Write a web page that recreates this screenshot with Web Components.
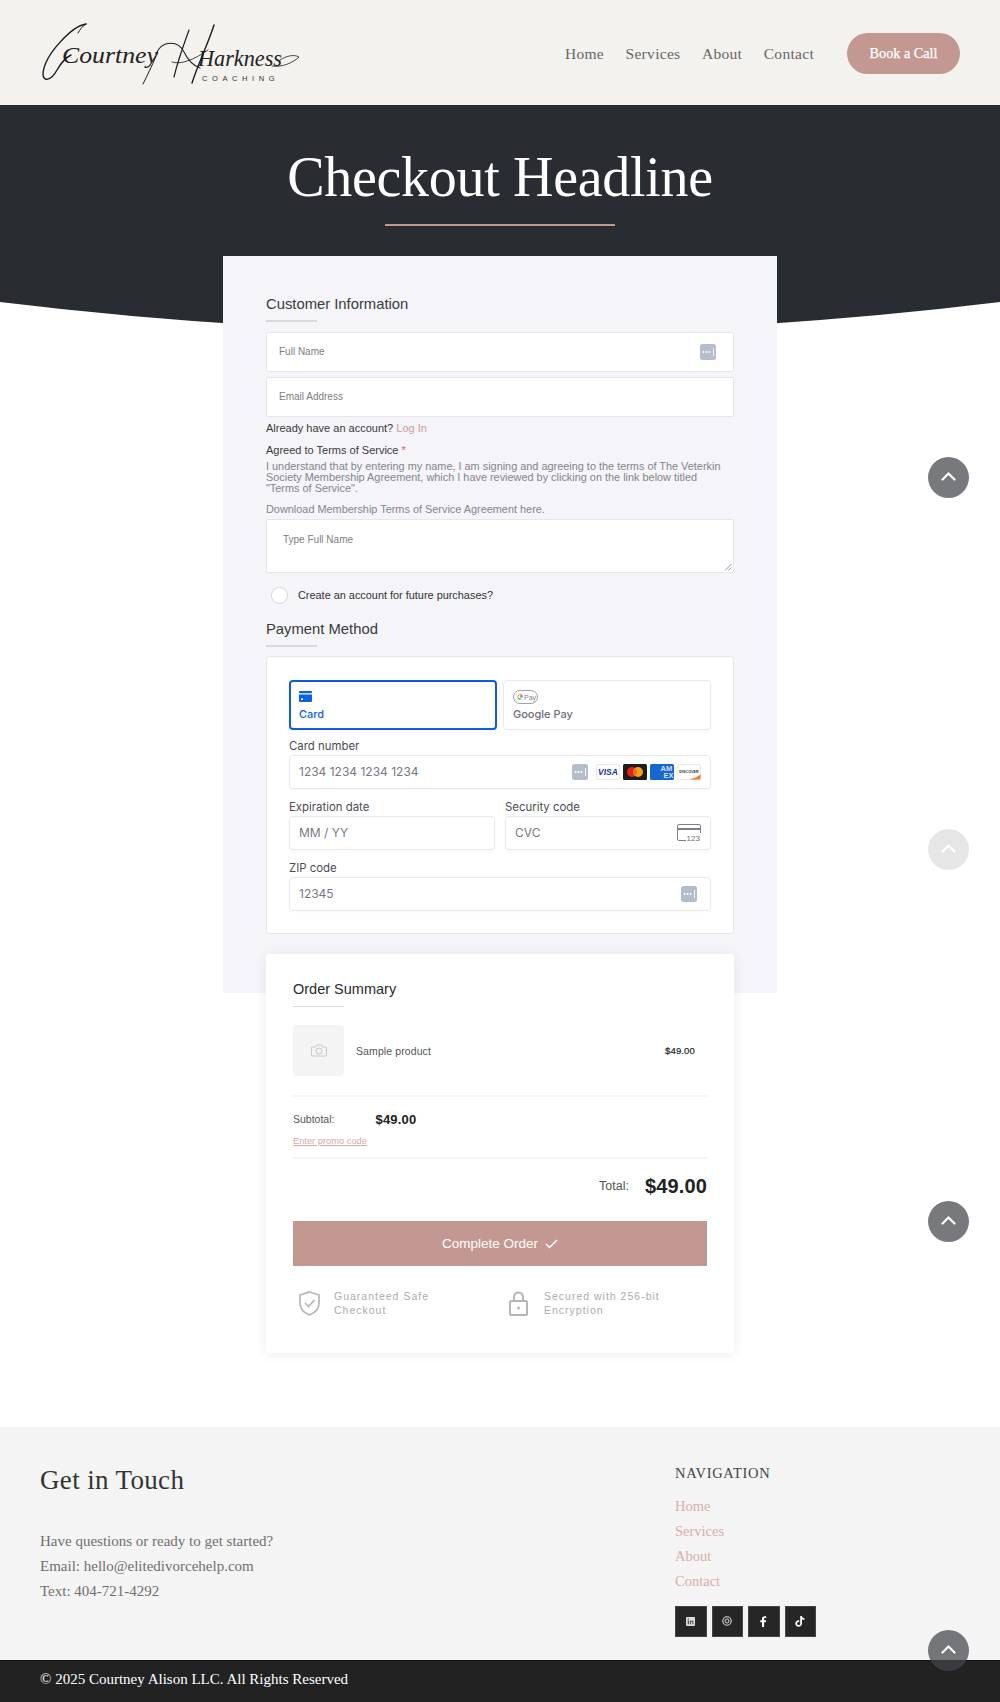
<!DOCTYPE html>
<html lang="en">
<head>
<meta charset="utf-8">
<title>Checkout</title>
<style>
  html, body { margin: 0; background: #fff; }
  body { position: relative; font-family: "Liberation Sans", Arial, sans-serif; }
</style>
</head>
<body>

<site-header></site-header>

<checkout-hero heading="Checkout Headline">
  <form-panel>
    <section-title>Customer Information</section-title>
    <text-field placeholder="Full Name" dots></text-field>
    <text-field placeholder="Email Address" style="margin-top:5px"></text-field>
    <terms-block></terms-block>
    <section-title style="margin-top:15px">Payment Method</section-title>
    <stripe-payment style="margin-top:-1px"></stripe-payment>
  </form-panel>
</checkout-hero>

<order-summary></order-summary>
<site-footer></site-footer>

<scroll-top style="top:457px"></scroll-top>
<scroll-top style="top:829px" faded></scroll-top>
<scroll-top style="top:1201px"></scroll-top>
<scroll-top style="top:1630px"></scroll-top>

<script>
const serif = `"Liberation Serif", "Times New Roman", serif`;
const sans = `"Liberation Sans", Arial, sans-serif`;

function define(name, html) {
    customElements.define(name, class extends HTMLElement {
        constructor() {
            super();
            this.attachShadow({ mode: "open" });
            this.shadowRoot.innerHTML = typeof html === "function" ? html(this) : html;
        }
    });
}

define("site-header", `
<style>
    :host { display: flex; align-items: center; height: 103px; padding: 2px 40px 0; background: #f4f2ee;
            border-bottom: 1px solid #26282c; font-family: ${serif}; }
    svg { display: block; flex: none; margin-top: -2px; }
    nav { margin-left: auto; display: flex; gap: 21.5px; font-size: 15.5px; letter-spacing: .3px; color: #666; }
    a { white-space: nowrap; }
    .cta { margin-left: 33px; width: 113px; height: 41px; border-radius: 21px; background: #c49892; color: #fff;
           display: flex; align-items: center; justify-content: center; font-size: 14.2px; -webkit-text-stroke: .25px #fff; }
</style>
<svg width="262" height="70" viewBox="38 18 262 70" fill="none">
    <g fill="#222" font-family="'Liberation Serif', serif" font-style="italic" font-size="24">
        <text x="60" y="63" textLength="96" lengthAdjust="spacingAndGlyphs">Courtney</text>
        <text x="196" y="66" textLength="84" lengthAdjust="spacingAndGlyphs">Harkness</text>
    </g>
    <g stroke="#1c1c1c" stroke-linecap="round">
        <path d="M84 24C70 26 42 55 41 74C41 82 49 81 55 70C59 63 63 58 69 55" stroke-width="1.4"/>
        <path d="M84 24C80 26 78 30 76 33" stroke-width="1"/>
        <path d="M154 56C150 66 145 76 141 84" stroke-width="1"/>
        <path d="M154 54C160 40 176 40 182 52C187 62 192 66 198 68" stroke-width="1.1"/>
        <path d="M187 30C182 44 176 60 172 77" stroke-width="1.2"/>
        <path d="M212 25C206 44 196 64 190 83" stroke-width="1.4"/>
        <path d="M170 62C178 65 192 60 206 50" stroke-width=".8"/>
        <path d="M270 66C280 68 292 62 297 57C292 54 284 56 278 60" stroke-width=".8"/>
    </g>
    <text x="200" y="81" font-family="'Liberation Sans', sans-serif" font-size="7.5" letter-spacing="4.6" fill="#333">COACHING</text>
</svg>
<nav><a>Home</a><a>Services</a><a>About</a><a>Contact</a></nav>
<a class="cta">Book a Call</a>
`);

define("checkout-hero", host => `
<style>
    :host { display: block; position: relative; font-family: ${serif}; }
    svg { position: absolute; left: 0; top: 0; width: 100%; height: 240px; display: block; }
    .inner { position: relative; display: flex; flex-direction: column; align-items: center; }
    h1 { margin: 37px 0 0; font-weight: 400; font-size: 56px; line-height: 68px; color: #fff; letter-spacing: -.3px; }
    .rule { width: 230px; height: 1.5px; background: #c49892; margin: 13px 0 30px; }
</style>
<svg viewBox="0 0 1000 240" preserveAspectRatio="none"><path d="M0 0H1000V196Q500 257 0 196Z" fill="#292c31"/></svg>
<div class="inner">
    <h1>${host.getAttribute("heading")}</h1>
    <div class="rule"></div>
    <slot></slot>
</div>
`);

define("form-panel", `
<style>
    :host { display: block; box-sizing: border-box; width: 554px; height: 737px; padding: 38px 43px 0; background: #f4f4f9; font-family: ${sans}; }
</style>
<slot></slot>
`);

define("section-title", `
<style>
    :host { display: block; font-size: 14.8px; line-height: 20px; color: #3a3a3a; font-family: ${sans}; }
    .rule { width: 51px; height: 2px; background: #d9d9dd; margin: 6px 0 10px; }
</style>
<div><slot></slot></div>
<div class="rule"></div>
`);

define("dots-icon", `
<style>:host { display: block; width: 16px; height: 16px; flex: none; } svg { display: block; }</style>
<svg width="16" height="16" viewBox="0 0 16 16">
    <rect width="16" height="16" rx="2.5" fill="#b5bccb"/>
    <circle cx="3.5" cy="8" r="1" fill="#fff"/><circle cx="6.5" cy="8" r="1" fill="#fff"/><circle cx="9.5" cy="8" r="1" fill="#fff"/>
    <rect x="13" y="4" width=".8" height="8" fill="#fff"/>
</svg>
`);

define("text-field", host => `
<style>
    :host { display: flex; align-items: center; box-sizing: border-box; height: 40px; padding: 0 17px 0 12px; background: #fff;
            border: 1px solid #e6e6ea; border-radius: 2px; font-size: 10px; color: #7d7d7d; font-family: ${sans}; }
    span { flex: 1; }
</style>
<span>${host.getAttribute("placeholder")}</span>
${host.hasAttribute("dots") ? "<dots-icon></dots-icon>" : ""}
`);

define("terms-block", `
<style>
    :host { display: block; font-family: ${sans}; font-size: 11px; color: #3a3a3a; }
    .acct { margin-top: 4px; line-height: 14px; }
    .acct a { color: #cf9f9b; }
    .agree { margin-top: 8px; line-height: 14px; }
    .agree i { font-style: normal; color: #e25b55; }
    .desc { margin-top: 4px; line-height: 11px; font-size: 10.9px; color: #85858a; white-space: nowrap; }
    .down { margin-top: 8px; line-height: 14px; font-size: 10.9px; color: #85858a; }
    .area { position: relative; box-sizing: border-box; height: 54px; margin-top: 3px; padding: 14px 16px; background: #fff;
            border: 1px solid #e6e6ea; border-radius: 2px; font-size: 10px; line-height: 12px; color: #808080; }
    .grip { position: absolute; right: 1px; bottom: 1px; }
    .create { display: flex; align-items: center; gap: 10px; margin: 14px 0 0 5px; line-height: 17px; font-size: 10.9px; color: #333; }
    .radio { width: 15px; height: 15px; flex: none; border: 1px solid #d7d7da; border-radius: 50%; background: #fff; }
</style>
<div class="acct">Already have an account? <a>Log In</a></div>
<div class="agree">Agreed to Terms of Service <i>*</i></div>
<div class="desc">I understand that by entering my name, I am signing and agreeing to the terms of The Veterkin<br>Society Membership Agreement, which I have reviewed by clicking on the link below titled<br>"Terms of Service".</div>
<div class="down">Download Membership Terms of Service Agreement here.</div>
<div class="area">Type Full Name
    <svg class="grip" width="8" height="8" viewBox="0 0 8 8" fill="none" stroke="#777" stroke-width=".8"><path d="M1 7.5L7.5 1M4.5 7.5L7.5 4.5"/></svg>
</div>
<div class="create"><div class="radio"></div><div>Create an account for future purchases?</div></div>
`);

define("stripe-input", host => `
<style>
    :host { display: block; font-family: Inter, ${sans}; }
    label { display: block; font-size: 11.4px; line-height: 14px; color: #4a4b55; margin-bottom: 2px; }
    .box { display: flex; align-items: center; box-sizing: border-box; height: 34px; padding: 0 9px; background: #fff;
           border: 1px solid #e9e9ec; border-radius: 4px; box-shadow: 0 1px 2px rgba(0,0,0,.03); font-size: 12px; color: #77787f; }
    span { flex: 1; }
    .icons { display: flex; align-items: center; gap: 3px; }
</style>
<label>${host.getAttribute("label")}</label>
<div class="box"><span>${host.getAttribute("placeholder")}</span><div class="icons"><slot></slot></div></div>
`);

define("card-brands", `
<style>
    :host { display: flex; gap: 3px; margin-left: 5px; }
    svg { display: block; }
</style>
<svg width="24" height="16" viewBox="0 0 24 16">
    <rect x=".5" y=".5" width="23" height="15" rx="1.5" fill="#fff" stroke="#e8e8ea"/>
    <text x="12" y="11.3" text-anchor="middle" font-family="'Liberation Sans', sans-serif" font-size="8.5" font-weight="700" font-style="italic" fill="#1434a8">VISA</text>
</svg>
<svg width="24" height="16" viewBox="0 0 24 16">
    <rect width="24" height="16" rx="1.5" fill="#1d1d1d"/>
    <circle cx="9" cy="8" r="5" fill="#e2231a"/><circle cx="15" cy="8" r="5" fill="#f79e1b"/>
    <path d="M12 4a5 5 0 0 1 0 8a5 5 0 0 1 0-8Z" fill="#f26a1f"/>
</svg>
<svg width="24" height="16" viewBox="0 0 24 16">
    <rect width="24" height="16" rx="1.5" fill="#1668cf"/>
    <g font-family="'Liberation Sans', sans-serif" font-size="7.5" font-weight="700" fill="#cfe2f8"><text x="10.5" y="7">AM</text><text x="13.5" y="14">EX</text></g>
</svg>
<svg width="24" height="16" viewBox="0 0 24 16">
    <rect x=".5" y=".5" width="23" height="15" rx="1.5" fill="#fff" stroke="#e8e8ea"/>
    <path d="M12 15.5C17 14.5 21 12.5 23.5 10.5V15.5Z" fill="#f27a24"/>
    <text x="12" y="9" text-anchor="middle" font-family="'Liberation Sans', sans-serif" font-size="3.7" font-weight="700" fill="#333">DISCOVER</text>
</svg>
`);

define("stripe-payment", `
<style>
    :host { display: block; box-sizing: border-box; height: 278px; padding: 23px 22px 0; background: #fff; border: 1px solid #e7e7eb; border-radius: 4px; font-family: Inter, ${sans}; }
    .tabs { display: grid; grid-template-columns: 208px 208px; gap: 6px; }
    .tab { box-sizing: border-box; height: 50px; padding: 9px 9px 0; border: 1px solid #e9e9ec; border-radius: 4px; font-size: 11px; font-weight: 500; color: #6d6e78; box-shadow: 0 1px 2px rgba(0,0,0,.03); }
    .tab.on { border: 2px solid #0b5fde; padding: 8px 8px 0; color: #0b62e0; }
    .tab svg { display: block; height: 14px; margin-bottom: 3px; }
    .tab div { line-height: 14px; }
    .rows { display: grid; grid-template-columns: 206px 206px; column-gap: 10px; row-gap: 11px; margin-top: 9px; }
    .wide { grid-column: 1 / 3; }
</style>
<div class="tabs">
    <div class="tab on">
        <svg width="14" height="14" viewBox="0 0 14 14" fill="#0b62e0"><rect y="1" width="13" height="2.2" rx=".8"/><path d="M0 4.5h13V11a1 1 0 0 1-1 1H1a1 1 0 0 1-1-1Z"/><rect x="2" y="8.4" width="2" height="1.6" fill="#fff"/></svg>
        <div>Card</div>
    </div>
    <div class="tab">
        <svg width="26" height="14" viewBox="0 0 26 14" fill="none">
            <rect x=".5" y=".5" width="24" height="13" rx="6.5" fill="#fff" stroke="#8b8c92" stroke-width=".8"/>
            <circle cx="7" cy="7" r="2.2" stroke="#ea4335" stroke-width="1.1" stroke-dasharray="3.5 10.5" stroke-dashoffset="-9"/>
            <circle cx="7" cy="7" r="2.2" stroke="#fbbc05" stroke-width="1.1" stroke-dasharray="3.5 10.5" stroke-dashoffset="-5.5"/>
            <circle cx="7" cy="7" r="2.2" stroke="#34a853" stroke-width="1.1" stroke-dasharray="3.5 10.5" stroke-dashoffset="-2"/>
            <path d="M7 7H9.4" stroke="#4285f4" stroke-width="1.1"/>
            <text x="11" y="9.6" font-family="'Liberation Sans', sans-serif" font-size="7" fill="#85868c">Pay</text>
        </svg>
        <div>Google Pay</div>
    </div>
</div>
<div class="rows">
    <stripe-input class="wide" label="Card number" placeholder="1234 1234 1234 1234"><dots-icon></dots-icon><card-brands></card-brands></stripe-input>
    <stripe-input label="Expiration date" placeholder="MM / YY"></stripe-input>
    <stripe-input label="Security code" placeholder="CVC">
        <svg width="24" height="18" viewBox="0 0 24 18" fill="none" stroke="#7d7e86" stroke-width="1">
            <path d="M9 16.5H2a1.5 1.5 0 0 1-1.5-1.5V2A1.5 1.5 0 0 1 2 .5H22A1.5 1.5 0 0 1 23.5 2V9"/>
            <path d="M.5 5H23.5" stroke-width="2"/>
            <text x="9.5" y="17" stroke="none" fill="#6d6e78" font-family="'Liberation Sans', sans-serif" font-size="8">123</text>
        </svg>
    </stripe-input>
    <stripe-input class="wide" label="ZIP code" placeholder="12345"><dots-icon style="margin-right:4px"></dots-icon></stripe-input>
</div>
`);

define("order-summary", `
<style>
    :host { display: block; position: relative; box-sizing: border-box; width: 468px; height: 399px; margin: -39px auto 74px; padding: 25px 27px 0;
            background: #fff; border-radius: 3px; box-shadow: 0 2px 14px rgba(0,0,0,.07); font-family: ${sans}; color: #333; }
    .title { font-size: 14.5px; line-height: 20px; color: #2b2b2b; }
    .rule { width: 51px; height: 1.5px; background: #dcdcdf; margin: 7px 0 18px; }
    .item { display: flex; align-items: center; height: 51px; font-size: 10.5px; color: #555; }
    .thumb { width: 51px; height: 51px; border-radius: 4px; background: #f4f4f4; display: flex; align-items: center; justify-content: center; margin-right: 12px; }
    .name { flex: 1; letter-spacing: .1px; }
    .price { font-size: 9.5px; color: #222; margin-right: 12px; -webkit-text-stroke: .2px #222; letter-spacing: .15px; }
    hr { margin: 0; border: 0; height: 2px; background: #f6f6f6; }
    .sub { display: flex; align-items: center; height: 20px; margin-top: 12px; font-size: 10.5px; color: #555; }
    .sub b { margin-left: 41px; font-size: 13px; font-weight: 700; color: #222; letter-spacing: .2px; }
    .promo { display: block; margin: 4px 0 8px; line-height: 16px; font-size: 9.3px; color: #d7a8a4; text-decoration: underline; }
    .total { display: flex; justify-content: flex-end; align-items: center; gap: 16px; height: 40px; margin: 7px 0 15px; font-size: 12.5px; color: #555; }
    .total b { font-size: 20px; color: #222; letter-spacing: .15px; }
    .btn { display: flex; align-items: center; justify-content: center; gap: 7px; height: 45px; background: #c49892; color: #fff; font-size: 13.5px; }
    .trust { display: grid; grid-template-columns: 210px auto; margin-top: 23px; padding-left: 6px; font-size: 10.5px; line-height: 14px; letter-spacing: 1px; color: #acacac; }
    .trust div { display: flex; align-items: center; gap: 14px; }
    .trust div + div { gap: 16px; }
    svg { display: block; flex: none; }
</style>
<div class="title">Order Summary</div>
<div class="rule"></div>
<div class="item">
    <div class="thumb">
        <svg width="16" height="13" viewBox="0 0 16 13" fill="none" stroke="#c5c7cc" stroke-width="1"><path d="M1.5 3H4.5L5.5 1H10.5L11.5 3H14.5A1 1 0 0 1 15.5 4V11A1 1 0 0 1 14.5 12H1.5A1 1 0 0 1 .5 11V4A1 1 0 0 1 1.5 3Z"/><circle cx="8" cy="7" r="3"/></svg>
    </div>
    <span class="name">Sample product</span>
    <span class="price">$49.00</span>
</div>
<hr style="margin-top:19px">
<div class="sub">Subtotal:<b>$49.00</b></div>
<a class="promo">Enter promo code</a>
<hr>
<div class="total"><span>Total:</span><b>$49.00</b></div>
<div class="btn">Complete Order
    <svg width="13" height="10" viewBox="0 0 13 10" fill="none" stroke="#fff" stroke-width="1.4"><path d="M1 5L4.5 8.5L12 1"/></svg>
</div>
<div class="trust">
    <div>
        <svg width="21" height="25" viewBox="0 0 21 25" fill="none" stroke="#b5b5b5" stroke-width="1.7"><path d="M10.5 1L20 4V12C20 18 15.5 22 10.5 24C5.5 22 1 18 1 12V4Z"/><path d="M6 12L9.5 15.5L15.5 9"/></svg>
        <span>Guaranteed Safe<br>Checkout</span>
    </div>
    <div>
        <svg width="19" height="25" viewBox="0 0 19 25" fill="none" stroke="#b5b5b5" stroke-width="2"><rect x="1" y="10" width="17" height="14" rx="1.5"/><path d="M5 10V6A4.5 4.5 0 0 1 14 6V10"/><circle cx="9.5" cy="17" r="1.5" fill="#b5b5b5" stroke="none"/></svg>
        <span>Secured with 256-bit<br>Encryption</span>
    </div>
</div>
`);

define("site-footer", `
<style>
    :host { display: block; font-family: ${serif}; }
    .top { display: flex; height: 234px; box-sizing: border-box; padding: 38px 40px 0; background: #f4f4f4; border-bottom: 1px solid #111; }
    .left { flex: 1; }
    h2 { margin: 0 0 34px; font-size: 27px; line-height: 30px; font-weight: 400; letter-spacing: .35px; color: #333; }
    p { margin: 0; font-size: 15px; line-height: 25px; color: #6f6f6f; }
    .right { width: 285px; }
    h3 { margin: -1px 0 12px; font-size: 14.5px; line-height: 18px; font-weight: 400; letter-spacing: .7px; color: #444; }
    .links a { display: block; font-size: 14.5px; line-height: 25px; color: #d8aeaa; }
    .social { display: flex; gap: 5px; margin-top: 12px; }
    .social div { width: 31.5px; height: 31px; background: #262626; display: flex; align-items: center; justify-content: center; box-sizing: border-box; border: 1px solid #444; }
    svg { display: block; }
    .bar { height: 41px; box-sizing: border-box; padding: 7px 40px 0; background: #222; color: #fff; font-size: 15px; line-height: 22px; }
</style>
<div class="top">
    <div class="left">
        <h2>Get in Touch</h2>
        <p>Have questions or ready to get started?</p>
        <p>Email: hello@elitedivorcehelp.com</p>
        <p>Text: 404-721-4292</p>
    </div>
    <div class="right">
        <h3>NAVIGATION</h3>
        <div class="links"><a>Home</a><a>Services</a><a>About</a><a>Contact</a></div>
        <div class="social">
            <div><svg width="9" height="9" viewBox="0 0 9 9"><rect width="9" height="9" rx="1" fill="#ddd"/><path d="M1.7 3.5H3V7.3H1.7ZM1.7 1.6H3V2.8H1.7ZM3.8 3.5H5V4C5.4 3.3 7.4 3 7.4 5V7.3H6.2V5.3C6.2 4.3 5 4.3 5 5.3V7.3H3.8Z" fill="#555"/></svg></div>
            <div><svg width="10" height="10" viewBox="0 0 10 10" fill="none" stroke="#ddd"><circle cx="5" cy="5" r="4.2" stroke-width="1.1"/><circle cx="5" cy="5" r="2" stroke-width="1"/></svg></div>
            <div><svg width="7" height="11" viewBox="0 0 7 11"><path d="M2 11V6.2H.3V4.3H2V2.9C2 1.1 3 .2 4.6 .2C5.3 .2 6 .3 6.2 .3V2H5.2C4.3 2 4.1 2.4 4.1 3V4.3H6.1L5.8 6.2H4.1V11Z" fill="#fff"/></svg></div>
            <div><svg width="10" height="11" viewBox="0 0 10 11"><path d="M5.2 0H7C7.1 1.3 8 2.2 9.4 2.3V4C8.5 4 7.7 3.8 7 3.3V7.2C7 9.4 5.4 10.8 3.6 10.8C1.7 10.8 .3 9.3 .3 7.5C.3 5.4 2.2 3.9 4.2 4.3V6.1C3.2 5.8 2.1 6.4 2.1 7.5C2.1 8.4 2.8 9.1 3.6 9.1C4.5 9.1 5.2 8.4 5.2 7.4Z" fill="#fff"/></svg></div>
        </div>
    </div>
</div>
<div class="bar">© 2025 Courtney Alison LLC. All Rights Reserved</div>
`);

define("scroll-top", `
<style>
    :host { position: absolute; right: 31px; width: 41px; height: 41px; border-radius: 50%; display: flex; align-items: center; justify-content: center;
            background: rgba(68,69,75,.72); }
    :host([faded]) { background: rgba(60,60,60,.13); }
    svg { display: block; margin-bottom: 3px; }
</style>
<svg width="15" height="9" viewBox="0 0 15 9" fill="none" stroke="#fff" stroke-width="2.2" stroke-linecap="round" stroke-linejoin="round"><path d="M1.5 7.5L7.5 1.5L13.5 7.5"/></svg>
`);
</script>
</body>
</html>
